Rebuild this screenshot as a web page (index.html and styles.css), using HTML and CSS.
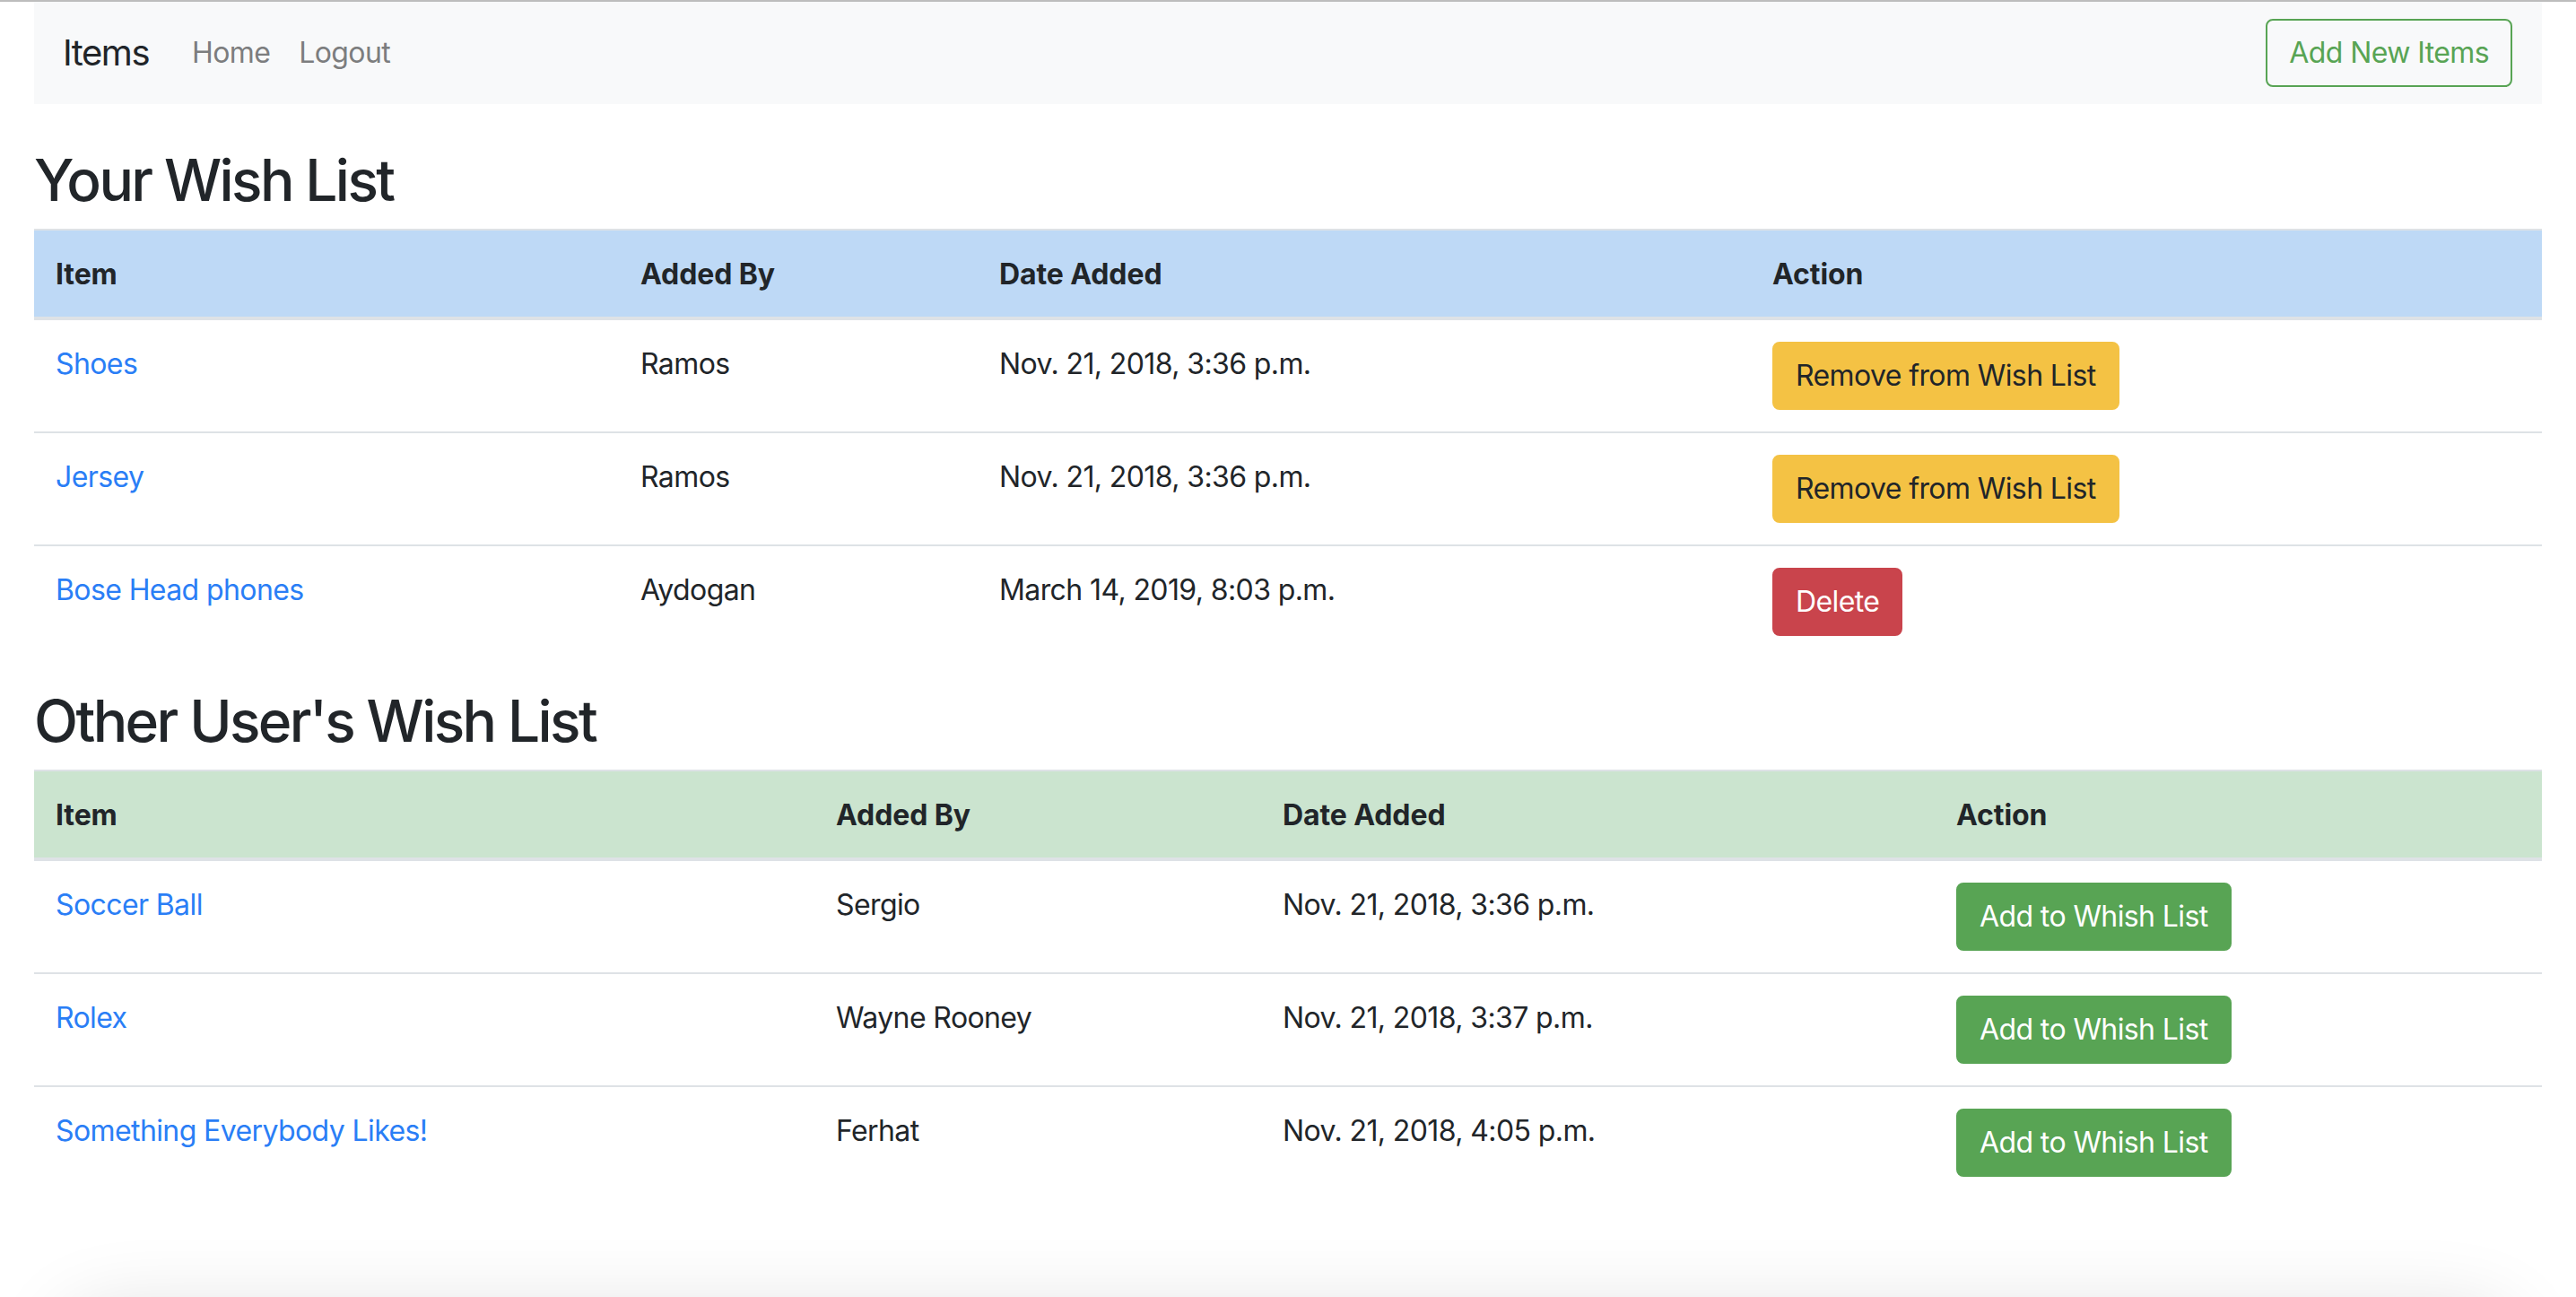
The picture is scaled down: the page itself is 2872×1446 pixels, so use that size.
FILE: index.html
```html
<!DOCTYPE html>
<html lang="en">
<head>
<meta charset="utf-8">
<title>Items</title>
<link rel="stylesheet" href="styles.css">
</head>
<body>
<div class="topline"></div>
<div class="page">
  <nav class="navbar">
    <a class="brand" href="#">Items</a>
    <ul class="nav">
      <li><a class="nav-link" href="#">Home</a></li>
      <li><a class="nav-link" href="#">Logout</a></li>
    </ul>
    <a class="btn btn-outline-success" href="#">Add New Items</a>
  </nav>

  <h2 class="title">Your Wish List</h2>
  <table class="tbl tbl-mine">
    <colgroup><col class="c1"><col class="c2"><col class="c3"><col class="c4"></colgroup>
    <thead>
      <tr><th>Item</th><th>Added By</th><th>Date Added</th><th>Action</th></tr>
    </thead>
    <tbody>
      <tr><td><a href="#">Shoes</a></td><td>Ramos</td><td>Nov. 21, 2018, 3:36 p.m.</td><td><a class="btn btn-warning" href="#">Remove from Wish List</a></td></tr>
      <tr><td><a href="#">Jersey</a></td><td>Ramos</td><td>Nov. 21, 2018, 3:36 p.m.</td><td><a class="btn btn-warning" href="#">Remove from Wish List</a></td></tr>
      <tr><td><a href="#">Bose Head phones</a></td><td>Aydogan</td><td>March 14, 2019, 8:03 p.m.</td><td><a class="btn btn-danger" href="#">Delete</a></td></tr>
    </tbody>
  </table>

  <h2 class="title">Other User's Wish List</h2>
  <table class="tbl tbl-other">
    <colgroup><col class="c1"><col class="c2"><col class="c3"><col class="c4"></colgroup>
    <thead>
      <tr><th>Item</th><th>Added By</th><th>Date Added</th><th>Action</th></tr>
    </thead>
    <tbody>
      <tr><td><a href="#">Soccer Ball</a></td><td>Sergio</td><td>Nov. 21, 2018, 3:36 p.m.</td><td><a class="btn btn-success" href="#">Add to Whish List</a></td></tr>
      <tr><td><a href="#">Rolex</a></td><td>Wayne Rooney</td><td>Nov. 21, 2018, 3:37 p.m.</td><td><a class="btn btn-success" href="#">Add to Whish List</a></td></tr>
      <tr><td><a href="#">Something Everybody Likes!</a></td><td>Ferhat</td><td>Nov. 21, 2018, 4:05 p.m.</td><td><a class="btn btn-success" href="#">Add to Whish List</a></td></tr>
    </tbody>
  </table>
</div>
<div class="shade"></div>
</body>
</html>
```
FILE: styles.css
```css
html, body {
  margin: 0;
  padding: 0;
}
body {
  font-family: Inter, "Liberation Sans", sans-serif;
  font-size: 32px;
  line-height: 48px;
  letter-spacing: -0.6px;
  color: #212529;
  background: #fff;
  height: 1446px;
  overflow: hidden;
  position: relative;
}
.topline {
  height: 2px;
  background: #bdbdbd;
}
.page {
  padding: 0 38px;
}
.navbar {
  display: flex;
  align-items: center;
  background: #f8f9fa;
  height: 114px;
  padding: 0 33px 0 32px;
  margin-bottom: 46px;
}
.brand {
  font-size: 40px;
  letter-spacing: -1.5px;
  color: #212529;
  text-decoration: none;
  margin-right: 32px;
}
.nav {
  display: flex;
  list-style: none;
  margin: 0;
  padding: 0;
  flex: 1;
}
.nav-link {
  display: block;
  padding: 0 16px;
  color: #7c7d7e;
  text-decoration: none;
}
.btn {
  display: inline-block;
  padding: 12px 24px;
  border: 2px solid transparent;
  border-radius: 8px;
  font-size: 32px;
  line-height: 48px;
  text-decoration: none;
  white-space: nowrap;
}
.btn-outline-success {
  color: #58a454;
  border-color: #58a454;
}
.btn-warning {
  background: #f4c244;
  border-color: #f4c244;
  color: #212529;
}
.btn-danger {
  background: #c9444c;
  border-color: #c9444c;
  color: #fff;
}
.btn-success {
  background: #58a454;
  border-color: #58a454;
  color: #fff;
}
.title {
  font-size: 64px;
  font-weight: 500;
  letter-spacing: -2.6px;
  line-height: 77px;
  margin: 0 0 16px;
}
.tbl {
  width: 100%;
  border-collapse: collapse;
  table-layout: fixed;
  margin-bottom: 32px;
}
.tbl th, .tbl td {
  padding: 24px;
  text-align: left;
  vertical-align: top;
  border-top: 2px solid #dee2e6;
}
.tbl th {
  font-weight: 700;
  letter-spacing: -0.1px;
  padding-top: 25px;
  padding-bottom: 23px;
  border-bottom: 4px solid #dee2e6;
}
.tbl td {
  padding-top: 25px;
  padding-bottom: 23px;
}
.tbl td .btn {
  margin-top: -1px;
  margin-bottom: 1px;
}
.tbl a:not(.btn) {
  color: #2a7ef6;
  text-decoration: none;
}
.tbl-mine thead th {
  background: #bed9f6;
}
.tbl-other thead th {
  background: #cbe4cf;
}
.tbl-mine .c1 { width: 652px; }
.tbl-mine .c2 { width: 400px; }
.tbl-mine .c3 { width: 862px; }
.tbl-mine .c4 { width: 882px; }
.tbl-other .c1 { width: 870px; }
.tbl-other .c2 { width: 498px; }
.tbl-other .c3 { width: 751px; }
.tbl-other .c4 { width: 677px; }
.shade {
  position: absolute;
  left: 0;
  right: 0;
  bottom: 0;
  height: 110px;
  overflow: hidden;
}
.shade::before {
  content: "";
  position: absolute;
  left: 70px;
  right: 70px;
  top: 134px;
  height: 100px;
  border-radius: 60px;
  box-shadow: 0 -6px 90px rgba(0, 0, 0, 0.14);
}
```
